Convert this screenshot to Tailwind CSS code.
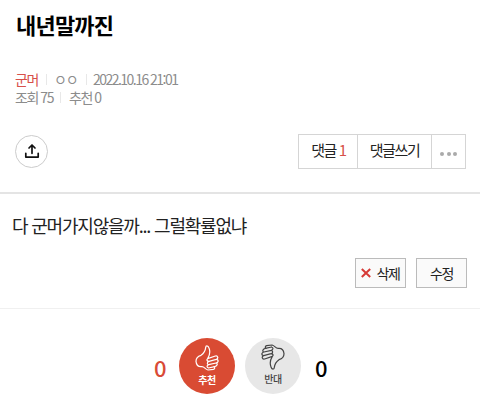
<!DOCTYPE html>
<html lang="ko">
<head>
<meta charset="utf-8">
<title>내년말까진</title>
<script src="https://cdn.jsdelivr.net/npm/@tailwindcss/browser@4"></script>
</head>
<body class="h-[417px] w-[480px] overflow-hidden bg-white font-['Noto_Sans_CJK_KR',sans-serif] text-[#222]">
<header class="h-[194px] border-b-2 border-[#e4e4e4] px-4 pt-[8px]">
  <h1 class="h-[32px] text-[22px] leading-[32px] font-bold tracking-[-0.8px] whitespace-nowrap text-black">내년말까진</h1>
  <div class="mt-[30px] -ml-px text-[14px] leading-[18px] tracking-[-1.45px] text-[#8c8c8c]">
    <div class="flex h-[18px] items-center whitespace-nowrap">
      <span class="w-[31px] text-[#d7504a]">군머</span>
      <span class="h-[11px] w-px bg-[#e8e8e8]"></span>
      <span class="ml-[7px] w-[32px] tracking-[-1.2px]">ㅇㅇ</span>
      <span class="h-[11px] w-px bg-[#e8e8e8]"></span>
      <span class="ml-[6px] tracking-[-1.53px]">2022.10.16 21:01</span>
    </div>
    <div class="flex h-[18px] items-center whitespace-nowrap">
      <span class="w-[45px]">조회 75</span>
      <span class="h-[11px] w-px bg-[#e8e8e8]"></span>
      <span class="ml-[8px]">추천 0</span>
    </div>
  </div>
  <div class="mt-[28px] -ml-px flex items-center justify-between">
    <button class="flex size-[33px] items-center justify-center rounded-full border border-[#ccc]">
      <svg class="size-[16px] -translate-y-[0.7px]" viewBox="0 0 16 16" fill="none" stroke="#111" stroke-width="1.7" stroke-linecap="round" stroke-linejoin="round"><path d="M8 10V2M5 4.700l3-3 3 3M1.800 10v3.800h12.400V10"/></svg>
    </button>
    <div class="-mr-[2px] flex h-[35px] w-[168px] border border-[#d5d5d5] text-[15px] leading-[30px] tracking-[-1.4px] whitespace-nowrap">
      <button class="w-[59px] border-r border-[#d5d5d5] pb-[3px] pl-px">댓글 <span class="text-[#d7504a]">1</span></button>
      <button class="w-[74px] border-r border-[#d5d5d5] pb-[3px]">댓글쓰기</button>
      <button class="flex flex-1 items-center justify-center gap-[2.5px] pt-[4px]">
        <span class="size-[4px] rounded-full bg-[#aaa]"></span><span class="size-[4px] rounded-full bg-[#aaa]"></span><span class="size-[4px] rounded-full bg-[#aaa]"></span>
      </button>
    </div>
  </div>
</header>
<main>
  <section class="h-[115px] border-b border-[#f0f0f0] pt-[18px]">
    <p class="ml-[12px] h-[26px] text-[18px] leading-[26px] tracking-[-1.2px] whitespace-nowrap">다 군머가지않을까... 그럴확률없냐</p>
    <div class="mt-[20px] mr-[13px] flex justify-end gap-[10px] text-[14px] leading-[28px] tracking-[-1.3px]">
      <button class="flex h-[30px] w-[51px] items-center justify-center gap-[5px] border border-[#bbb] bg-[#fafafa]">
        <svg class="size-[10px]" viewBox="0 0 10 10" fill="none" stroke="#d63a36" stroke-width="2"><path d="M.8 1l8.4 8M9.2 1L.8 9"/></svg>삭제
      </button>
      <button class="h-[30px] w-[51px] border border-[#bbb] bg-[#fafafa]">수정</button>
    </div>
  </section>
  <section class="flex items-center pt-[29px] text-[22px] leading-[30px]">
    <span class="ml-[154px] w-[25px] pt-[2px] font-medium tracking-[-1px] text-[#d94b37]">0</span>
    <button class="flex size-[56px] flex-col items-center rounded-full bg-[#d94b33] pt-[7px] text-white">
      <svg class="h-[26px] w-[24px]" viewBox="0 0 72 78" fill="none" stroke="currentColor" stroke-width="3.6" stroke-linecap="round" stroke-linejoin="round"><path d="M38 41C44 31 46 19 42 9C39 0 32 1 32 8C31 18 25 26 18 31C8 34 3 39 3 49C4 60 9 66 20 65C28 64 30 73 39 75L55 73C61 71 60 66 56 65M38 41L61 33C69 31 71 40 64 43L42 49M65 43C72 45 70 53 63 54L41 59M64 54C69 57 66 64 59 65L40 69M38 41C34 44 36 49 42 49C35 51 36 58 41 59C34 62 35 68 41 69"/></svg>
      <span class="mt-[2px] text-[10px] leading-[14px] font-bold tracking-[-0.4px]">추천</span>
    </button>
    <button class="ml-[10px] flex size-[56px] flex-col items-center rounded-full bg-[#e7e7e7] pt-[6px] text-[#444]">
      <svg class="h-[26px] w-[24px] rotate-180" viewBox="0 0 72 78" fill="none" stroke="currentColor" stroke-width="3.6" stroke-linecap="round" stroke-linejoin="round"><path d="M38 41C44 31 46 19 42 9C39 0 32 1 32 8C31 18 25 26 18 31C8 34 3 39 3 49C4 60 9 66 20 65C28 64 30 73 39 75L55 73C61 71 60 66 56 65M38 41L61 33C69 31 71 40 64 43L42 49M65 43C72 45 70 53 63 54L41 59M64 54C69 57 66 64 59 65L40 69M38 41C34 44 36 49 42 49C35 51 36 58 41 59C34 62 35 68 41 69"/></svg>
      <span class="mt-[2px] text-[10px] leading-[14px] font-medium tracking-[-0.4px]">반대</span>
    </button>
    <span class="ml-[14px] pt-[2px] font-medium text-black">0</span>
  </section>
</main>
</body>
</html>
